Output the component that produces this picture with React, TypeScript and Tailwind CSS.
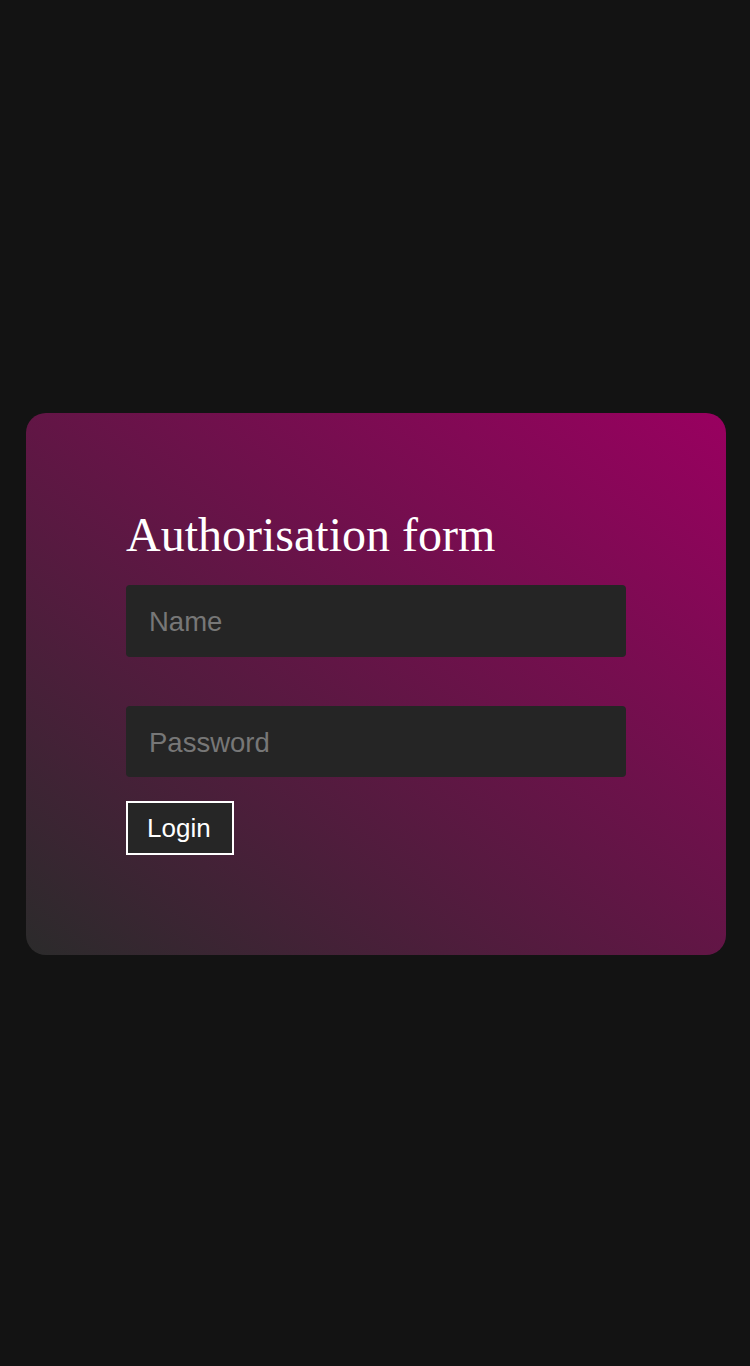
import React from 'react';

export default function App() {
  return (
    <div className="min-h-[1366px] w-full bg-[#131313] pt-[413px] pl-[26px]">
      <form
        className="w-[700px] h-[542px] rounded-[20px] bg-[linear-gradient(to_top_right,#2b2b2b,#990060)] px-[100px] pt-[95px] flex flex-col"
        onSubmit={(e) => e.preventDefault()}
      >
        <h1 className="text-white text-[48px] leading-[53px] font-['Liberation_Serif',serif] font-normal">
          Authorisation form
        </h1>
        <input
          type="text"
          placeholder="Name"
          className="mt-[24px] h-[72px] w-full rounded-[4px] bg-[#252525] pl-[23px] pr-[22px] pt-[2px] text-[27.5px] text-white placeholder:text-[#777777] font-['Liberation_Sans',Arial,sans-serif] outline-none"
        />
        <input
          type="password"
          placeholder="Password"
          className="mt-[49px] h-[71px] w-full rounded-[4px] bg-[#252525] pl-[23px] pr-[22px] pt-[2px] text-[27.5px] text-white placeholder:text-[#777777] font-['Liberation_Sans',Arial,sans-serif] outline-none"
        />
        <div className="mt-[24px]">
          <button
            type="submit"
            className="h-[54px] border-2 border-white bg-[#262626] pl-[19px] pr-[21px] text-[26px] text-white font-['Liberation_Sans',Arial,sans-serif]"
          >
            Login
          </button>
        </div>
      </form>
    </div>
  );
}
